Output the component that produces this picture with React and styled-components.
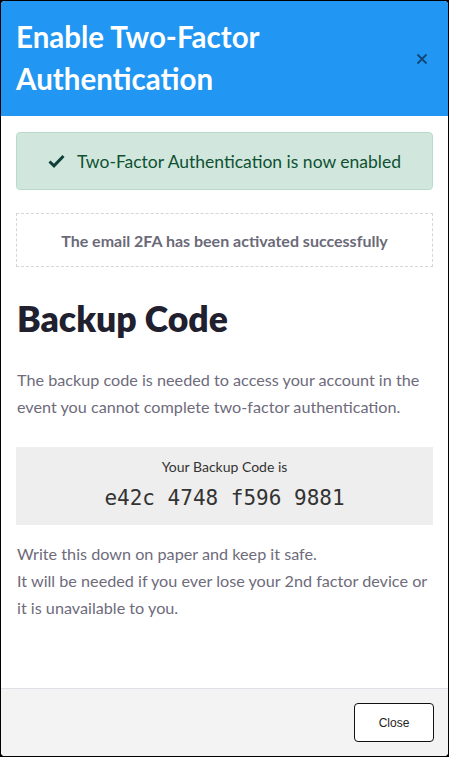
import React from "react";
import styled, { createGlobalStyle } from "styled-components";

const Global = createGlobalStyle`
  html, body { margin: 0; padding: 0; background: #000; }
  body { font-family: Lato, "Noto Sans", sans-serif; }
  * { box-sizing: border-box; }
`;

const Modal = styled.div`
  margin: 1px;
  height: 755px;
  background: #fff;
  border-radius: 4px;
  overflow: hidden;
  display: flex;
  flex-direction: column;
`;

const Header = styled.div`
  background: #2196f3;
  height: 115px;
  padding: 0 15px;
  display: flex;
  align-items: center;
  justify-content: space-between;
`;

const Title = styled.h1`
  margin: 0 0 2px 0;
  color: #fff;
  font-family: Lato, sans-serif;
  font-weight: 700;
  font-size: 29.5px;
  line-height: 42px;
  width: 300px;
`;

const CloseX = styled.button`
  border: 0;
  background: transparent;
  padding: 0;
  margin-right: 4px;
  width: 14px;
  height: 14px;
  display: flex;
  opacity: 0.7;
`;

const Body = styled.div`
  flex: 1;
  padding: 16px 15px 0 15px;
  display: flex;
  flex-direction: column;
`;

const Alert = styled.div`
  height: 58px;
  background: #d1e7dd;
  border: 1px solid #badbcc;
  border-radius: 4px;
  color: #0f5132;
  display: flex;
  align-items: center;
  justify-content: center;
  gap: 12px;
  font-size: 17.5px;
`;

const Dashed = styled.div`
  margin-top: 23px;
  height: 54px;
  border: 1px dashed #d6d6d6;
  display: flex;
  align-items: center;
  justify-content: center;
  font-size: 16px;
  font-weight: 700;
  color: #6b6a78;
`;

const Heading = styled.h2`
  margin: 28px 0 0 1px;
  font-size: 35.5px;
  line-height: 48px;
  font-weight: 800;
  color: #20202e;
`;

const Para = styled.p`
  margin: ${(p) => p.$mt || 0}px 0 0 1px;
  font-size: 16.2px;
  line-height: 27px;
  color: #6e6b7b;
`;

const CodeBox = styled.div`
  margin-top: 27px;
  height: 78px;
  background: #eeeeee;
  display: flex;
  flex-direction: column;
  align-items: center;
  padding-top: 10px;
`;

const CodeLabel = styled.div`
  font-size: 14px;
  line-height: 20px;
  color: #333;
`;

const Code = styled.div`
  margin-top: 9px;
  font-family: "DejaVu Sans Mono", monospace;
  font-size: 21px;
  line-height: 24px;
  color: #333;
`;

const Footer = styled.div`
  height: 68px;
  border-top: 1px solid #dee2e6;
  background: #f3f3f3;
  display: flex;
  align-items: center;
  justify-content: flex-end;
  padding: 0 14px 0 0;
`;

const Button = styled.button`
  width: 80px;
  height: 39px;
  background: #fff;
  border: 1px solid #111;
  border-radius: 4px;
  font-family: "Liberation Sans", Arial, sans-serif;
  font-size: 12px;
  color: #222;
`;

export default function App() {
  return (
    <>
      <Global />
      <Modal>
        <Header>
          <Title>Enable Two-Factor Authentication</Title>
          <CloseX aria-label="close">
            <svg width="14" height="14" viewBox="0 0 14 14">
              <path d="M2.5 2.5 L11.5 11.5 M11.5 2.5 L2.5 11.5" stroke="#0b2742" strokeWidth="1.8" fill="none" />
            </svg>
          </CloseX>
        </Header>
        <Body>
          <Alert>
            <svg width="17" height="14" viewBox="0 0 17 14">
              <path d="M1.5 7.5 L6 11.8 L15.5 2" stroke="#0f3f36" strokeWidth="3" fill="none" />
            </svg>
            <span>Two-Factor Authentication is now enabled</span>
          </Alert>
          <Dashed>The email 2FA has been activated successfully</Dashed>
          <Heading>Backup Code</Heading>
          <Para $mt={23}>
            The backup code is needed to access your account in the event you cannot complete two-factor authentication.
          </Para>
          <CodeBox>
            <CodeLabel>Your Backup Code is</CodeLabel>
            <Code>e42c 4748 f596 9881</Code>
          </CodeBox>
          <Para $mt={15}>
            Write this down on paper and keep it safe.
            <br />
            It will be needed if you ever lose your 2nd factor device or it is unavailable to you.
          </Para>
        </Body>
        <Footer>
          <Button>Close</Button>
        </Footer>
      </Modal>
    </>
  );
}
